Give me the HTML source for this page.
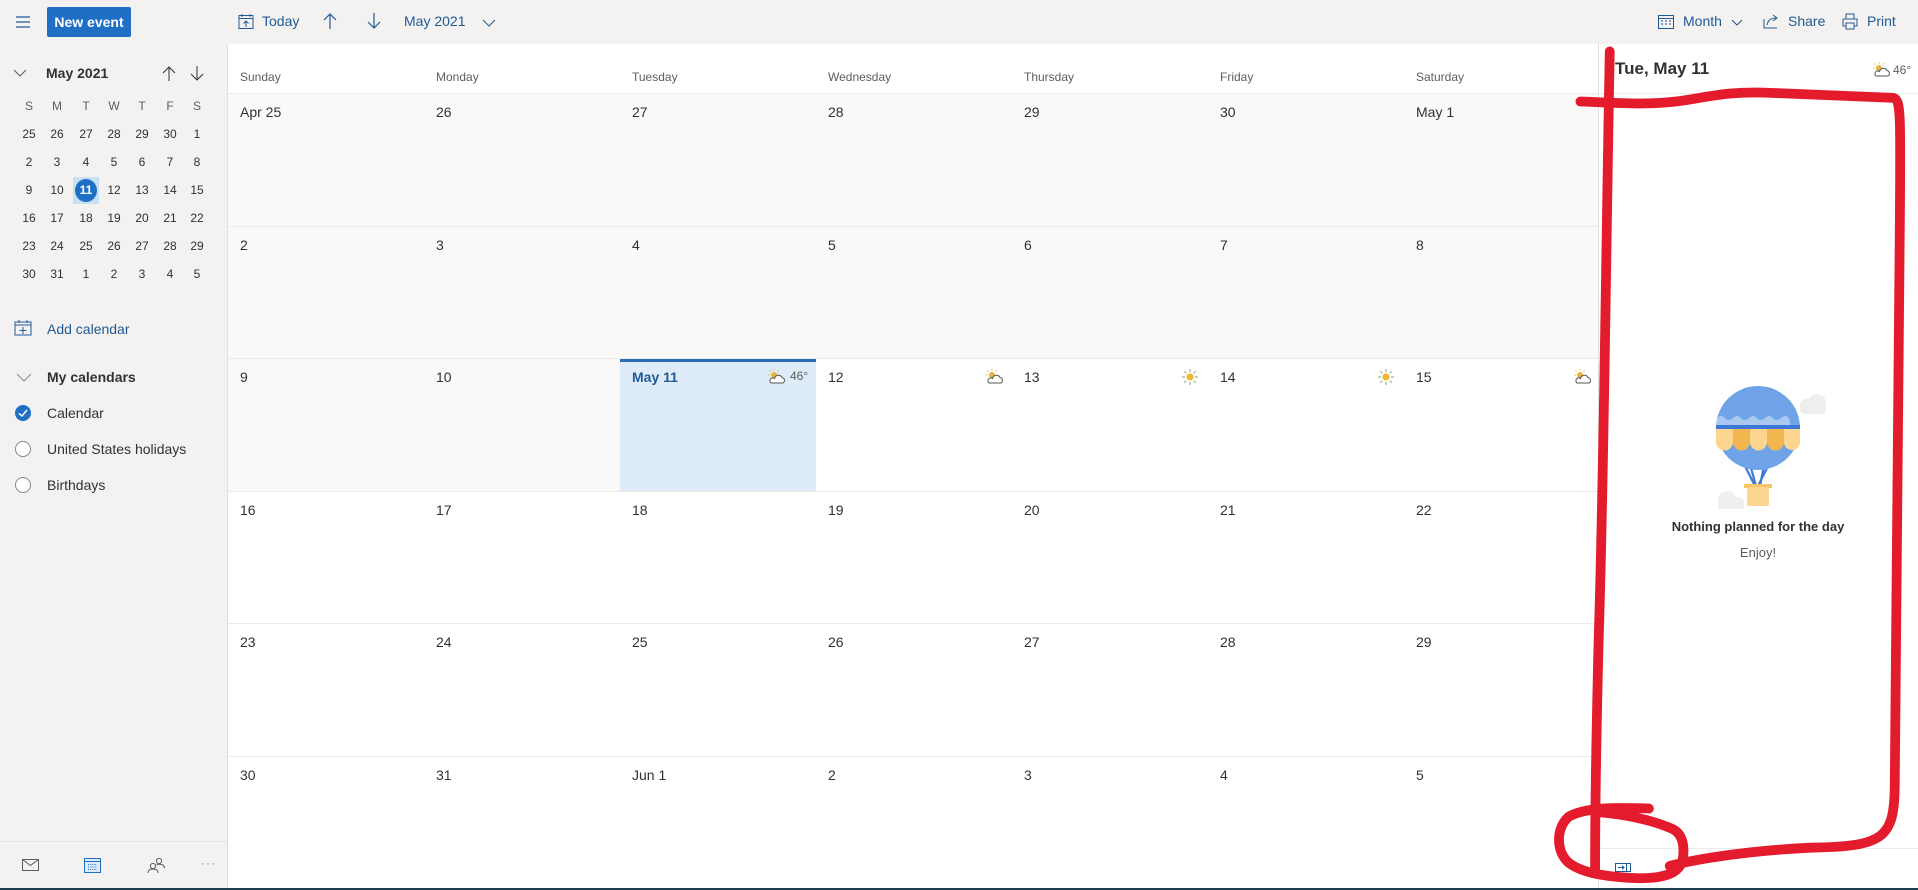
<!DOCTYPE html>
<html><head><meta charset="utf-8"><style>
*{box-sizing:border-box;margin:0;padding:0}
body{width:1918px;height:890px;overflow:hidden;background:#fff;font-family:"Liberation Sans",sans-serif;color:#323130;position:relative}
.a{position:absolute;white-space:nowrap}
.top{left:0;top:0;width:1918px;height:44px;background:#f3f2f1}
.side{left:0;top:44px;width:228px;height:846px;background:#f3f2f1;border-right:1px solid #e1dfdd}
.mc{font-size:12px;color:#323130;width:28px;text-align:center}
.dn{font-size:12px;color:#605e5c;top:70px}
.dt{font-size:14px;color:#323130}
.blue{color:#205a96}
</style></head><body>
<div class="a top"></div>
<div class="a side"></div>
<svg class="a" style="left:15px;top:15px" width="16" height="14"><path d="M1 2h14M1 7h14M1 12h14" stroke="#205a96" stroke-width="1.3"/></svg>
<div class="a" style="left:47px;top:7px;width:84px;height:30px;background:#1f6fc5;border-radius:2px;color:#fff;font-size:14px;font-weight:bold;line-height:30px;text-align:center">New event</div>
<svg class="a" style="left:238px;top:13px" width="16" height="17"><rect x="1" y="2.5" width="14" height="13" fill="none" stroke="#205a96"/><path d="M1 5.5h14M4 1v3M12 1v3M8 14V8M5.5 10.5L8 8l2.5 2.5" stroke="#205a96" fill="none"/></svg>
<div class="a blue" style="left:262px;top:13px;font-size:14px">Today</div>
<svg class="a" style="left:322px;top:12px" width="16" height="18"><path d="M8 17V2M2 8l6-6 6 6" stroke="#205a96" fill="none" stroke-width="1.2"/></svg>
<svg class="a" style="left:366px;top:12px" width="16" height="18"><path d="M8 1v15M2 10l6 6 6-6" stroke="#205a96" fill="none" stroke-width="1.2"/></svg>
<div class="a blue" style="left:404px;top:13px;font-size:14px">May 2021</div>
<svg class="a" style="left:482px;top:19px" width="14" height="9"><path d="M1 1l6 6 6-6" stroke="#205a96" fill="none"/></svg>
<svg class="a" style="left:1658px;top:14px" width="16" height="15"><rect x=".5" y="1.5" width="15" height="13" fill="none" stroke="#205a96"/><path d="M.5 4.5h15M3 7h2M7 7h2M11 7h2M3 10h2M7 10h2M11 10h2" stroke="#205a96"/></svg>
<div class="a blue" style="left:1683px;top:13px;font-size:14px">Month</div>
<svg class="a" style="left:1731px;top:19px" width="12" height="8"><path d="M1 1l5 5 5-5" stroke="#205a96" fill="none"/></svg>
<svg class="a" style="left:1763px;top:13px" width="16" height="16"><path d="M1 6v9h13M4 12c1-5 4-7 9-7M10 2l4 3-4 3" stroke="#205a96" fill="none"/></svg>
<div class="a blue" style="left:1788px;top:13px;font-size:14px">Share</div>
<svg class="a" style="left:1842px;top:13px" width="16" height="17"><path d="M4 6V1h8v5M1 6h14v7h-3M4 13H1V6M4 10h8v6H4z" stroke="#205a96" fill="none"/></svg>
<div class="a blue" style="left:1867px;top:13px;font-size:14px">Print</div>

<svg class="a" style="left:13px;top:69px" width="14" height="9"><path d="M1 1l6 6 6-6" stroke="#605e5c" fill="none"/></svg>
<div class="a" style="left:46px;top:65px;font-size:14px;font-weight:bold;color:#323130">May 2021</div>
<svg class="a" style="left:162px;top:65px" width="14" height="17"><path d="M7 16V2M1 8l6-6 6 6" stroke="#323130" fill="none"/></svg>
<svg class="a" style="left:190px;top:65px" width="14" height="17"><path d="M7 1v14M1 9l6 6 6-6" stroke="#323130" fill="none"/></svg>
<div class="a" style="left:73px;top:177px;width:26px;height:27px;background:#c7e0f4"></div>
<div class="a" style="left:75px;top:179px;width:22px;height:23px;border-radius:50%;background:#1f6fc5"></div>
<div id="mini"></div>

<div class="a" style="left:0;top:841px;width:228px;border-top:1px solid #e6e4e2"></div>

<svg class="a" style="left:14px;top:320px" width="18" height="16"><rect x="1" y="2" width="16" height="13" fill="none" stroke="#205a96"/><path d="M1 5h16M5 0v3M13 0v3M9 7v7M5.5 10.5h7" stroke="#205a96"/></svg>
<div class="a blue" style="left:47px;top:321px;font-size:14px">Add calendar</div>
<svg class="a" style="left:16px;top:373px" width="16" height="9"><path d="M1 1l7 7 7-7" stroke="#8a8886" fill="none"/></svg>
<div class="a" style="left:47px;top:369px;font-size:14px;font-weight:bold">My calendars</div>
<svg class="a" style="left:14px;top:404px" width="18" height="18"><circle cx="9" cy="9" r="8" fill="#1f6fc5"/><path d="M5 9.5l3 2.5 5-6" stroke="#fff" stroke-width="1.5" fill="none"/></svg>
<div class="a" style="left:47px;top:405px;font-size:14px">Calendar</div>
<svg class="a" style="left:14px;top:440px" width="18" height="18"><circle cx="9" cy="9" r="7.5" fill="#fff" stroke="#8a8886"/></svg>
<div class="a" style="left:47px;top:441px;font-size:14px">United States holidays</div>
<svg class="a" style="left:14px;top:476px" width="18" height="18"><circle cx="9" cy="9" r="7.5" fill="#fff" stroke="#8a8886"/></svg>
<div class="a" style="left:47px;top:477px;font-size:14px">Birthdays</div>

<svg class="a" style="left:22px;top:859px" width="18" height="13"><rect x=".5" y=".5" width="16" height="11" fill="none" stroke="#605e5c"/><path d="M.5 .5l8 6 8-6" stroke="#605e5c" fill="none"/></svg>
<svg class="a" style="left:84px;top:857px" width="18" height="16"><rect x=".5" y="1.5" width="16" height="14" fill="#deecf9" stroke="#1f6fc5"/><path d="M.5 4.5h16" stroke="#1f6fc5"/><path d="M4 7.5h9M4 10h9M4 12.5h9" stroke="#1f6fc5" stroke-dasharray="1 1.2"/></svg>
<svg class="a" style="left:147px;top:857px" width="18" height="17"><circle cx="6" cy="9" r="2.6" fill="none" stroke="#605e5c"/><path d="M1 16c0-3 2-4 5-4s5 1 5 4" stroke="#605e5c" fill="none"/><circle cx="12" cy="4" r="2.6" fill="none" stroke="#605e5c"/><path d="M9.5 8c1-.6 2-.8 3-.8 3 0 5 1 5 4" stroke="#605e5c" fill="none"/></svg>
<div class="a" style="left:201px;top:856px;font-size:12px;color:#8a8886;letter-spacing:1px">···</div>

<div id="grid"></div>

<div class="a" style="left:1598px;top:44px;width:320px;height:846px;background:#fff;border-left:1px solid #e1dfdd"></div>
<div class="a" style="left:1598px;top:93px;width:320px;border-top:1px solid #edebe9"></div>
<div class="a" style="left:1615px;top:59px;font-size:17px;font-weight:bold;color:#323130">Tue, May 11</div>
<svg class="a" style="left:1873px;top:62px" width="18" height="16"><circle cx="6" cy="6" r="3" fill="#e8b33c"/><path d="M6 0v1.5M0 6h1.5M1.5 1.5l1 1M10.5 1.5l-1 1" stroke="#e8b33c"/><path d="M3 14h12a3 3 0 0 0-1-5.5 4 4 0 0 0-7.5 1A2.3 2.3 0 0 0 3 14z" fill="#fff" stroke="#555"/></svg>
<div class="a" style="left:1893px;top:63px;font-size:12px;color:#605e5c">46°</div>
<svg class="a" style="left:1690px;top:380px" width="140" height="130">
 <circle cx="127" cy="23" r="9" fill="#eee"/><circle cx="117" cy="26" r="7" fill="#eee"/><rect x="110" y="26" width="26" height="8" rx="4" fill="#eee"/>
 <circle cx="37" cy="120" r="9" fill="#eee"/><circle cx="48" cy="123" r="6" fill="#eee"/><rect x="28" y="121" width="26" height="8" fill="#eee"/>
 <path d="M47 70l18 36M56 70l10 36M77 70l-7 36M86 70l-18 36" stroke="#3b78d8" stroke-width="2.2"/>
 <circle cx="68" cy="48" r="42" fill="#6fa3e8"/>
 <path d="M27 38q5-4 8 0t8 0t8 0t8 0t8 0t8 0t8 0t8 0t8 0 l2 9H26z" fill="#a9c7f0"/>
 <rect x="26" y="45" width="84" height="4" fill="#3b78d8"/>
 <path d="M26 49h17v13a8.5 8.5 0 0 1-17 0z" fill="#fcd591"/>
 <path d="M43 49h17v13a8.5 8.5 0 0 1-17 0z" fill="#f2b650"/>
 <path d="M60 49h17v13a8.5 8.5 0 0 1-17 0z" fill="#fcd591"/>
 <path d="M77 49h17v13a8.5 8.5 0 0 1-17 0z" fill="#f2b650"/>
 <path d="M94 49h16v13a8 8 0 0 1-16 0z" fill="#fcd591"/>
 <rect x="54" y="104" width="28" height="4" fill="#f7c46a"/>
 <rect x="57" y="107" width="22" height="19" rx="2" fill="#fcd591"/>
</svg>
<div class="a" style="left:1598px;top:519px;width:320px;text-align:center;font-size:13px;font-weight:bold;color:#323130">Nothing planned for the day</div>
<div class="a" style="left:1598px;top:545px;width:320px;text-align:center;font-size:13px;color:#605e5c">Enjoy!</div>
<div class="a" style="left:1598px;top:848px;width:320px;border-top:1px solid #edebe9"></div>
<svg class="a" style="left:1615px;top:863px" width="17" height="10"><rect x=".5" y=".5" width="15" height="8" fill="none" stroke="#205a96"/><path d="M11.5 .5v8M3 4.5h6M7 2.5l2 2-2 2" stroke="#205a96" fill="none"/></svg>

<div class="a" style="left:0;top:888px;width:1918px;height:2px;background:#1d3d4d"></div>

<svg class="a" style="left:0;top:0" width="1918" height="890" viewBox="0 0 1568 727.6" preserveAspectRatio="none">
<g stroke="#e31b2d" stroke-width="8" fill="none" stroke-linecap="round" stroke-linejoin="round">
<path d="M1316 42C1313 200 1311 400 1307 520 1305 600 1304 660 1304 712"/>
<path d="M1292 83C1320 84 1345 86 1370 83 1395 80 1410 74 1450 76 1500 78 1530 79 1548 80 1554 82 1554 90 1553 200 1552 400 1550 540 1549 640 1549 686 1540 692 1480 693 1420 696 1380 704 1365 708"/>
<path d="M1348 661C1320 660 1295 660 1282 668 1272 678 1272 695 1282 705 1292 713 1310 717 1340 718 1365 718 1375 712 1376 700 1377 690 1375 682 1368 678 1350 670 1330 666 1308 664"/>
</g></svg>

<script>
var m=document.getElementById('mini'),h='';
var xs=[29,57,86,114,142,170,197];
var hd=['S','M','T','W','T','F','S'];
for(var i=0;i<7;i++)h+='<div class="a mc" style="left:'+(xs[i]-14)+'px;top:99px;color:#605e5c">'+hd[i]+'</div>';
var d=[[25,26,27,28,29,30,1],[2,3,4,5,6,7,8],[9,10,11,12,13,14,15],[16,17,18,19,20,21,22],[23,24,25,26,27,28,29],[30,31,1,2,3,4,5]];
var ys=[127,155,183,211,239,267];
for(var r=0;r<6;r++)for(var c=0;c<7;c++){var s=(r==2&&c==2)?'color:#fff;font-weight:bold;':'';h+='<div class="a mc" style="left:'+(xs[c]-14)+'px;top:'+ys[r]+'px;'+s+'">'+d[r][c]+'</div>';}
m.innerHTML=h;
var g='',names=['Sunday','Monday','Tuesday','Wednesday','Thursday','Friday','Saturday'];
for(i=0;i<7;i++)g+='<div class="a dn" style="left:'+(240+196*i)+'px">'+names[i]+'</div>';
var D=[['Apr 25',26,27,28,29,30,'May 1'],[2,3,4,5,6,7,8],[9,10,'May 11',12,13,14,15],[16,17,18,19,20,21,22],[23,24,25,26,27,28,29],[30,31,'Jun 1',2,3,4,5]];
for(r=0;r<6;r++){var y=Math.round(93+132.6*r);
 g+='<div class="a" style="left:228px;top:'+y+'px;width:1370px;border-top:1px solid #edebe9"></div>';
 for(c=0;c<7;c++){var x=228+196*c;
  var past=(r<2)||(r==2&&c<2);
  if(past)g+='<div class="a" style="left:'+x+'px;top:'+(y+1)+'px;width:196px;height:132px;background:#faf9f8"></div>';
  if(r==2&&c==2){g+='<div class="a" style="left:'+x+'px;top:'+(y+1)+'px;width:196px;height:132px;background:#deecf9;border-top:3px solid #2b6cb5"></div>';
   g+='<div class="a dt" style="left:'+(x+12)+'px;top:'+(y+11)+'px;color:#205a96;font-weight:bold">May 11</div>';
   g+='<div class="a" style="left:'+(x+170)+'px;top:'+(y+11)+'px;font-size:12px;color:#605e5c">46°</div>';}
  else g+='<div class="a dt" style="left:'+(x+12)+'px;top:'+(y+11)+'px">'+D[r][c]+'</div>';
 }
}
var cloud='<svg width="18" height="16"><circle cx="6" cy="6" r="3" fill="#e8b33c"/><path d="M6 0v1.5M0 6h1.5M1.5 1.5l1 1M10.5 1.5l-1 1" stroke="#e8b33c"/><path d="M3 14h12a3 3 0 0 0-1-5.5 4 4 0 0 0-7.5 1A2.3 2.3 0 0 0 3 14z" fill="#fff" stroke="#555"/></svg>';
var sun='<svg width="18" height="18"><circle cx="9" cy="9" r="3.5" fill="#f2b233"/><path d="M9 1v3M9 14v3M1 9h3M14 9h3M3.3 3.3l2 2M12.7 12.7l2 2M3.3 14.7l2-2M12.7 5.3l2-2" stroke="#8aa06a"/></svg>';
var y2=Math.round(93+132.6*2);
g+='<div class="a" style="left:'+(228+196*2+148)+'px;top:'+(y2+11)+'px">'+cloud+'</div>';
g+='<div class="a" style="left:'+(228+196*3+170)+'px;top:'+(y2+11)+'px">'+cloud+'</div>';
g+='<div class="a" style="left:'+(228+196*4+169)+'px;top:'+(y2+10)+'px">'+sun+'</div>';
g+='<div class="a" style="left:'+(228+196*5+169)+'px;top:'+(y2+10)+'px">'+sun+'</div>';
g+='<div class="a" style="left:'+(228+196*6+170)+'px;top:'+(y2+11)+'px">'+cloud+'</div>';
document.getElementById('grid').innerHTML=g;
</script>
</body></html>
